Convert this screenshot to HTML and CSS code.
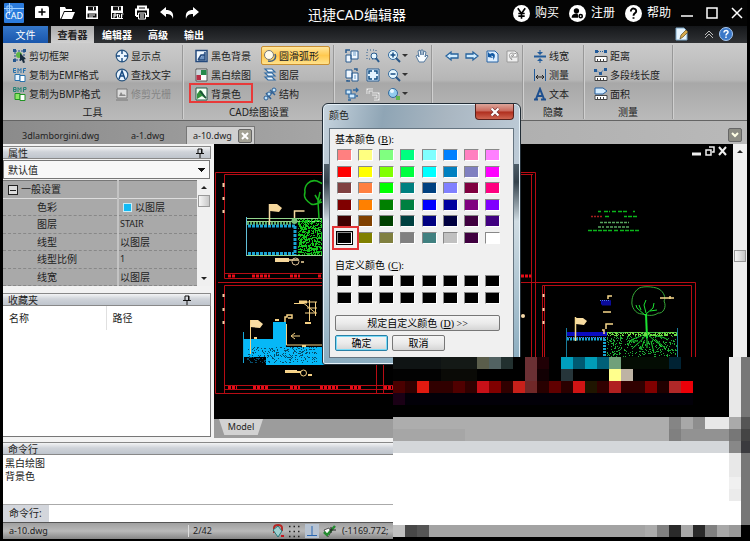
FILE: index.html
```html
<!DOCTYPE html>
<html lang="zh-CN">
<head>
<meta charset="utf-8">
<title>迅捷CAD编辑器</title>
<link rel="stylesheet" href="styles.css">
</head>
<body>
<div class="app">
  <header class="titlebar">
    <div class="quick">
      <svg class="logo" viewBox="0 0 20 20" role="img" aria-label="CAD"><rect width="20" height="20" rx="1" fill="#2b7bdc"/><path d="M0 5.500h20M5.500 0v12M3 3h5v5H3z" stroke="#9fd0ff" fill="none"/><text x="1" y="16" class="logo-text">CAD</text></svg>
      <button class="q" aria-label="新建"><svg viewBox="0 0 16 16"><path d="M3 1h10a2 2 0 0 1 2 2v10H1V3a2 2 0 0 1 2-2z" fill="#fff"/><path d="M8 3.500v7M4.500 7h7" stroke="#000" stroke-width="1.500"/></svg></button>
      <button class="q" aria-label="打开"><svg viewBox="0 0 16 16"><path d="M1 14V2h5l1 2h6v2H5L2 13z" fill="#fff"/><path d="M5.500 7H16l-3 7H2.500z" fill="#fff"/></svg></button>
      <button class="q" aria-label="保存"><svg viewBox="0 0 16 16"><path d="M2 1h12v13H2z" fill="#fff"/><path d="M4 1.500h8v4H4zM3.500 8.500h9v4h-9z" fill="#111"/><path d="M5 10h6M5 12h4M9.500 2v3" stroke="#fff"/></svg></button>
      <button class="q" aria-label="另存为PDF"><svg viewBox="0 0 16 16"><path d="M2 1h12v13H2z" fill="#fff"/><path d="M4 1.500h8v4H4zM3 8h11v5H3z" fill="#111"/><path d="M9.500 2v3M5 13V9h2v2H5M8.500 9v4h1l1-1v-2l-1-1M12.500 13V9h2M12.500 11h1" stroke="#fff" fill="none"/></svg></button>
      <button class="q" aria-label="打印"><svg viewBox="0 0 16 16"><path d="M4 4V1.500h8V4M2 11V4.500h12V11h-2M4 11H2" fill="none" stroke="#fff" stroke-width="2"/><path d="M4.500 8h7v6h-7z" fill="#111" stroke="#fff"/><path d="M6 10h4M6 12h4" stroke="#fff"/></svg></button>
      <button class="q" aria-label="撤销"><svg viewBox="0 0 16 16"><path d="M1 7l6-5v3c5 0 8 2 7 9-1-4-3-5-7-5v3z" fill="#fff"/></svg></button>
      <button class="q" aria-label="重做"><svg viewBox="0 0 16 16"><path d="M15 7L9 2v3c-5 0-8 2-7 9 1-4 3-5 7-5v3z" fill="#fff"/></svg></button>
    </div>
    <h1 class="title">迅捷CAD编辑器</h1>
    <div class="account">
      <button class="acc"><svg viewBox="0 0 16 16"><circle cx="8" cy="8" r="8" fill="#fff"/><path d="M4.500 3L8 8l3.500-5M8 8v5M5 8h6M5 10.500h6" stroke="#000" stroke-width="1.500" fill="none"/></svg>购买</button>
      <button class="acc"><svg viewBox="0 0 16 16"><circle cx="8" cy="8" r="8" fill="#fff"/><circle cx="7" cy="5.500" r="2.500" fill="#000"/><path d="M2.500 12c0-3 2-4 5-4 1 0 1 1 1 4z" fill="#000"/><circle cx="11" cy="10.500" r="1.500" fill="#fff" stroke="#000" stroke-width="1.500"/></svg>注册</button>
      <button class="acc"><svg viewBox="0 0 16 16"><circle cx="8" cy="8" r="8" fill="#fff"/><path d="M5.500 6c0-4 5.500-3 5 0 0 1.500-2.500 1.500-2.500 4M8 11.500V13" stroke="#000" stroke-width="1.800" fill="none"/></svg>帮助</button>
    </div>
    <div class="winctl">
      <button aria-label="最小化"><svg viewBox="0 0 14 14"><path d="M1 10h12" stroke="#fff" stroke-width="1.500"/></svg></button>
      <button aria-label="最大化"><svg viewBox="0 0 14 14"><path d="M2 2h10v10H2z" stroke="#fff" stroke-width="1.500" fill="none"/></svg></button>
      <button aria-label="关闭"><svg viewBox="0 0 14 14"><path d="M2 2l10 10M12 2L2 12" stroke="#fff" stroke-width="1.500"/></svg></button>
    </div>
  </header>

  <nav class="menubar">
    <button class="tab file">文件</button>
    <button class="tab current">查看器</button>
    <button class="tab">编辑器</button>
    <button class="tab">高级</button>
    <button class="tab">输出</button>
    <span class="menu-tools">
      <button aria-label="样式"><svg viewBox="0 0 14 14"><path d="M1 1h8l3 3v9H1z" fill="#e7f5ff" stroke="#7aa5c5"/><path d="M5 12l1-4 5-5 2 2-5 5z" fill="#d7a94b" stroke="#5d4a20" stroke-width=".7"/></svg></button>
      <button class="up" aria-label="折叠功能区"><svg viewBox="0 0 14 14"><path d="M3 8l4-4 4 4M3 11l4-4 4 4" stroke="#bbb" fill="none"/></svg></button>
      <button aria-label="帮助主题"><svg viewBox="0 0 14 14"><circle cx="7" cy="7" r="6.500" fill="#3b78c8" stroke="#a9caf2"/><path d="M5 5.500c0-3 4.500-2.500 4 0 0 1-2 1-2 3M7 9.500v1.500" stroke="#fff" stroke-width="1.500" fill="none"/></svg></button>
    </span>
  </nav>

  <section class="ribbon">
    <div class="group g-tools">
      <div class="cells">
        <button class="cmd"><svg viewBox="0 0 14 14"><path d="M2 2h9v9H2z" fill="none" stroke="#1d4d8c" stroke-dasharray="2 1"/><path d="M0 0h3v3H0zM10 0h3v3h-3zM0 10h3v3H0z" fill="#25578f"/><circle cx="6" cy="6" r="3" fill="#5db545"/><path d="M7 4l6 6-2 .5 1 3-2 .5-1-3-2 1z" fill="#182b3c"/></svg>剪切框架</button>
        <button class="cmd"><svg viewBox="0 0 14 14"><path d="M3 .5H.5v4H3M.5 2.500H3M5 5V.5l1.500 2 1.500-2V5M10.500 5V.5H13M10.500 2.500h2" stroke="#2872ac" fill="none"/><path d="M2 6.500h5v6H2z" fill="#e8f5ff" stroke="#2872ac"/><path d="M7 7.500h5v6H7z" fill="#fff" stroke="#2872ac"/></svg>复制为EMF格式</button>
        <button class="cmd"><svg viewBox="0 0 14 14"><path d="M.5.5H3v4H.5zM.5 2.500H3M5 5V.5l1.500 2 1.500-2V5M10.500 5V.5H13v2h-2" stroke="#258277" fill="none"/><path d="M2 6.500h5v6H2z" fill="#8be663" stroke="#229424"/><path d="M7 7.500h5v6H7z" fill="#fff" stroke="#229424"/></svg>复制为BMP格式</button>
        <button class="cmd"><svg viewBox="0 0 14 14"><circle cx="7" cy="7" r="5.800" fill="#eaf5ff" stroke="#29547e" stroke-width="1.200"/><path d="M7 1v4M7 9v4M1 7h4M9 7h4" stroke="#174a82" stroke-width="1.400"/></svg>显示点</button>
        <button class="cmd"><svg viewBox="0 0 14 14"><circle cx="7" cy="7" r="5.800" fill="#eaf5ff" stroke="#29547e" stroke-width="1.200"/><path d="M4 11l3-8 3 8M5 8h4" stroke="#174a82" stroke-width="1.500" fill="none"/></svg>查找文字</button>
        <button class="cmd" disabled><svg viewBox="0 0 14 14"><path d="M2 2h10v9H2zM1 13h12" fill="#ddd" stroke="#777"/><path d="M4 9l2-4 2 3 1-1 2 2z" fill="#888"/></svg>修剪光栅</button>
      </div>
      <h2>工具</h2>
    </div>
    <div class="group g-draw">
      <div class="cells">
        <button class="cmd"><svg viewBox="0 0 14 14"><path d="M1 1.500h11v11H1z" fill="#f1f8ff" stroke="#24497c" stroke-width="1.500"/><path d="M3 11l3-5h4V3M10 4v7H3" stroke="#24497c" stroke-width="1.500" fill="#6d91c0"/></svg>黑色背景</button>
        <button class="cmd"><svg viewBox="0 0 14 14"><path d="M1 1h11v12H1z" fill="#fff" stroke="#555"/><path d="M1.500 7H6v5H1.500z" fill="#b72f46"/><path d="M6 2h5.500v5H6z" fill="#268a4b"/><path d="M1.500 2H6v5H1.500z" fill="#cad7dc"/></svg>黑白绘图</button>
        <button class="cmd"><svg viewBox="0 0 14 14"><path d="M1 1h11v12H1z" fill="#f5fff5" stroke="#265c4b"/><path d="M2 12V7l3-4 2 1 4 8-4-3z" fill="#34923e"/><path d="M5 4l6 7" stroke="#174c37" stroke-width="1.500"/></svg>背景色</button>
        <button class="cmd active"><svg viewBox="0 0 14 14"><circle cx="6" cy="6" r="4.500" fill="#fffbe9" stroke="#777"/><path d="M12 5c2 5-2 8-7 7" stroke="#466180" stroke-width="1.500" fill="none"/></svg>圆滑弧形</button>
        <button class="cmd"><svg viewBox="0 0 14 14"><path d="M2 1h7l3 3H5zM2 5h7l3 3H5zM2 9h7l3 3H5z" fill="#f3faff" stroke="#356da4" stroke-width="1.200"/></svg>图层</button>
        <button class="cmd"><svg viewBox="0 0 14 14"><path d="M2 12l10-9M3 6l5 6M7 3l5 5" stroke="#2e6095" stroke-width="1.500"/><g fill="#bee4ff" stroke="#2e6095"><circle cx="3" cy="11" r="2"/><circle cx="6" cy="7" r="2"/><circle cx="11" cy="3" r="2"/></g></svg>结构</button>
      </div>
      <h2>CAD绘图设置</h2>
    </div>
    <div class="group g-view">
      <div class="cells">
        <button class="cmd" aria-label="旋转视图"><svg viewBox="0 0 14 14"><path d="M1 6h5v7H1zM6 2h7v8H6z" fill="#f1f8ff" stroke="#285b8e"/><path d="M1 4V1h4" stroke="#285b8e" stroke-width="1.500" fill="none"/><path d="M8 4h3M8 6h3" stroke="#6b9cc8"/></svg></button>
        <button class="cmd" aria-label="复制视图"><svg viewBox="0 0 14 14"><path d="M1 2h6v8H1zM7 5h6v8H7z" fill="#f1f8ff" stroke="#285b8e"/><path d="M9 1h3v2M2 12v1h3" stroke="#285b8e" stroke-width="1.500" fill="none"/><path d="M9 8h2M9 10h2" stroke="#6b9cc8"/></svg></button>
        <button class="cmd" aria-label="三维轨道"><svg viewBox="0 0 14 14"><path d="M1 3h5v4H1zM4 7h6v4H4z" fill="#d3edff" stroke="#2c67a0" stroke-width="1.200"/><path d="M8 3h5M11 1l2 2-2 2M3 13h3M11 9h2" stroke="#2c67a0" stroke-width="1.300" fill="none"/></svg></button>
        <button class="cmd" aria-label="窗口缩放"><svg viewBox="0 0 14 14"><path d="M1 1h9v9H1z" fill="none" stroke="#285b8e" stroke-dasharray="1 2"/><circle cx="8" cy="7" r="3" fill="#e6f6ff" stroke="#285b8e"/><path d="M10 9l3 4" stroke="#285b8e" stroke-width="2"/></svg></button>
        <button class="cmd" aria-label="适合窗口"><svg viewBox="0 0 14 14"><path d="M1 1h12v12H1z" fill="#e3f3ff" stroke="#285b8e"/><path d="M3 6V3h3M8 3h3v3M11 8v3H8M6 11H3V8" stroke="#124e82" stroke-width="1.500" fill="none"/></svg></button>
        <button class="cmd" disabled aria-label="刷新"><svg viewBox="0 0 14 14"><path d="M2 7V3h5M6 7h6v5H8" stroke="#eee" stroke-width="3" fill="none"/><path d="M2 7V3h5M6 7h6v5H8" stroke="#999" fill="none"/></svg></button>
        <button class="cmd drop" aria-label="放大"><svg viewBox="0 0 14 14"><circle cx="6" cy="6" r="4.500" fill="#e5f7ff" stroke="#356b9e"/><path d="M6 3.500v5M3.500 6h5" stroke="#174c83" stroke-width="1.500"/><path d="M9 9l4 4" stroke="#285687" stroke-width="2"/></svg></button>
        <button class="cmd drop" aria-label="缩小"><svg viewBox="0 0 14 14"><circle cx="6" cy="6" r="4.500" fill="#e5f7ff" stroke="#356b9e"/><path d="M3.500 6h5" stroke="#174c83" stroke-width="1.500"/><path d="M9 9l4 4" stroke="#285687" stroke-width="2"/></svg></button>
        <button class="cmd drop" aria-label="缩放比例"><svg viewBox="0 0 14 14"><circle cx="6" cy="6" r="4.500" fill="#92cbed" stroke="#356b9e"/><circle cx="5" cy="4" r="2" fill="#eaf8ff"/><path d="M9 9l2 2" stroke="#285687" stroke-width="2"/><path d="M9 9h4v4H9z" fill="#62b54d"/></svg></button>
        <button class="cmd" aria-label="平移"><svg viewBox="0 0 14 14"><path d="M4 13L1 7l2-1 1 2-1-6 2-1 1 5V1h2v5l1-4 2 1-1 5 2-2 1 1-4 6z" fill="#f8fcff" stroke="#55799d"/></svg></button>
      </div>
    </div>
    <div class="group g-history">
      <div class="cells">
        <button class="cmd" aria-label="上一视图"><svg viewBox="0 0 14 14"><path d="M1 7l5-4v2h7v4H6v2z" fill="#d2edff" stroke="#27639d" stroke-width="1.300"/></svg></button>
        <button class="cmd" aria-label="下一视图"><svg viewBox="0 0 14 14"><path d="M13 7L8 3v2H1v4h7v2z" fill="#d2edff" stroke="#27639d" stroke-width="1.300"/></svg></button>
        <button class="cmd" aria-label="初始视图"><svg viewBox="0 0 14 14"><path d="M2 2h8l3 3v8H2z" fill="#deefff" stroke="#2762a4"/><path d="M3 8V3l2 2c4-3 7 2 3 6 1-4-1-5-2-4l2 2z" fill="#135aa4"/></svg></button>
        <button class="cmd" disabled aria-label="重做视图"><svg viewBox="0 0 14 14"><path d="M2 2h8l3 3v8H2z" fill="#eee" stroke="#999"/><path d="M12 3v5H7l2-2c-3-1-4 2-2 5-5-4-2-9 3-6z" fill="#fff" stroke="#999"/></svg></button>
      </div>
    </div>
    <div class="group g-hide">
      <div class="cells">
        <button class="cmd"><svg viewBox="0 0 14 14"><path d="M1 7.500h12" stroke="#235c9b" stroke-width="2"/><path d="M7 1v4M7 10v4" stroke="#235c9b"/><path d="M4 3l3 3 3-3zM4 12l3-3 3 3z" fill="#235c9b"/></svg>线宽</button>
        <button class="cmd"><svg viewBox="0 0 14 14"><path d="M1.500 1v12M12.500 1v12" stroke="#235c9b"/><path d="M3 9h8M5 7L3 9l2 2M9 7l2 2-2 2" stroke="#222" fill="none"/></svg>测量</button>
        <button class="cmd"><svg viewBox="0 0 14 14"><path d="M3 12L7 2l4 10M4 9h5M1 12.500h4M8 12.500h5" stroke="#1d4f8f" stroke-width="2" fill="none"/></svg>文本</button>
      </div>
      <h2>隐藏</h2>
    </div>
    <div class="group g-measure">
      <div class="cells">
        <button class="cmd"><svg viewBox="0 0 14 14"><path d="M1 1h3v3H1zM10 1h3v3h-3z" fill="#235c9b"/><path d="M4 2.500h6" stroke="#235c9b" stroke-dasharray="1 1"/><path d="M1 7.500h12v5H1z" fill="#fff" stroke="#444"/><path d="M3.500 10v2M6.500 10v2M9.500 10v2" stroke="#444"/></svg>距离</button>
        <button class="cmd"><svg viewBox="0 0 14 14"><path d="M0 1h3v3H0zM5 4h3v3H5zM10 0h3v3h-3z" fill="#235c9b"/><path d="M2 2l4 3 5-4" stroke="#235c9b" fill="none" stroke-dasharray="1 1"/><path d="M1 8.500h12v4H1z" fill="#fff" stroke="#444"/><path d="M3.500 10v2M6.500 10v2M9.500 10v2" stroke="#444"/></svg>多段线长度</button>
        <button class="cmd"><svg viewBox="0 0 14 14"><path d="M1 1h8l4 3-4 3H1z" fill="#d5ecff" stroke="#235c9b"/><path d="M1 8.500h12v4H1z" fill="#fff" stroke="#444"/><path d="M3.500 10v2M6.500 10v2M9.500 10v2" stroke="#444"/></svg>面积</button>
      </div>
      <h2>测量</h2>
    </div>
  </section>

  <nav class="doctabs">
    <button class="doc first">3dlamborgini.dwg</button>
    <button class="doc second">a-1.dwg</button>
    <span class="doc open">a-10.dwg<button class="doc-close" aria-label="关闭文档"><svg viewBox="0 0 12 12"><path d="M3 3l6 6M9 3L3 9" stroke="#fff" stroke-width="2"/></svg></button></span>
    <button class="doc-list" aria-label="文档列表"><svg viewBox="0 0 12 12"><path d="M3 4l3 3 3-3" stroke="#ffffe6" stroke-width="2" fill="none"/></svg></button>
  </nav>

  <main class="work">
    <aside class="side">
      <h3 class="pane-title">属性<svg viewBox="0 0 10 10"><path d="M3 5V1h4v4M1 5.500h8M5 6v4M6.500 1v4" stroke="#111" fill="none"/></svg></h3>
      <select class="preset" aria-label="属性预设"><option>默认值</option></select>
      <div class="props-wrap">
        <table class="props">
          <tr class="cat"><th><span class="minus"></span>一般设置</th><td></td></tr>
          <tr><th>色彩</th><td><span class="chip"></span>以图层</td></tr>
          <tr><th>图层</th><td class="latin">STAIR</td></tr>
          <tr><th>线型</th><td>以图层</td></tr>
          <tr><th>线型比例</th><td class="latin">1</td></tr>
          <tr><th>线宽</th><td>以图层</td></tr>
        </table>
        <div class="scroll"><i class="arr-up"></i><i class="thumb"></i><i class="arr-down"></i></div>
      </div>
      <h3 class="pane-title fav-title">收藏夹<svg viewBox="0 0 10 10"><path d="M3 5V1h4v4M1 5.500h8M5 6v4M6.500 1v4" stroke="#111" fill="none"/></svg></h3>
      <div class="fav"><table><tr><th>名称</th><th>路径</th></tr></table></div>
    </aside>

    <section class="view">
      <div class="stage">
        <svg class="drawing" viewBox="214 143 519 275" preserveAspectRatio="xMinYMin meet">
          <g fill="none" stroke="#b80c14">
            <path d="M215.500 171.500H535.500V392.500H215.500zM224.500 393V284.500H340M218 281.500H695.500V393M224.500 277.500V173.500H533M224.500 277.500H340M224.500 272.500H340M224.500 388.500H395M224.500 384.500H395M531.500 173V393M542.500 393V284.500H691.500V393M544.500 393V284M376.500 350V393M383.500 350V393"/>
          </g>
          <path stroke="#e80d18" stroke-width="3" stroke-dasharray="3 1" d="M228 275h8M252 275h18M290 275h10M318 275h22M228 386.500h9M253 386.500h16M290 386.500h10M320 386.500h18M350 386.500h12M384 386.500h9M521 275h10"/>
          <path stroke="#f0cfa8" stroke-width="2" d="M223.500 182v4M223.500 196v3M223.500 209v3M223.500 293v3M223.500 307v3M223.500 320v3M543.500 293v3M543.500 307v3M543.500 320v3"/>
          <g fill="none">
            <path stroke="#93d58d" d="M246 217.500h76M246 220.500h76M247 254.500h76"/>
            <path stroke="#5fab65" stroke-width="3" stroke-dasharray="2 1" d="M247 222.500h45"/>
            <path stroke="#1aa4d4" stroke-width="3" stroke-dasharray="3 1" d="M248 225h48M295 225v29M248 252.500h46"/>
            <path stroke="#62bfd8" d="M246.500 216v39"/>
            <path stroke="#f5d9a0" stroke-width="1.500" d="M269.500 203v21M294.500 218v-8h10M281 259h17M301 261h3M275 259.500h12"/>
            <circle cx="295.500" cy="260.500" r="3.500" stroke="#dec298"/>
            <path stroke="#18b41c" d="M325 184l-8-4c-8-2-13 5-12 11-2 6 2 9 6 12 4 2 8-2 12-2M319 218l-1-18 2-9M318 199l-3-5M318 203l3-5" stroke-width="1.500"/>
          </g>
          <path fill="#f6d79b" d="M270 203h7l5 4-3 4-9-1zM275 257h14v4h-14zM285 369h12v3h-12z"/>
          <circle cx="294.500" cy="220" r="3" fill="#79c37b"/>
          <path fill="#06b8f7" d="M244 338h29v-17h13v25h50v18h-70v-8h-22z"/>
          <g fill="none" stroke="#f6d184">
            <path d="M250.500 319v34M286.500 323v21h44M292 335h8M295 332l-4 3 4 3M294 302.500h10l11 9M309.500 299v21M315.500 301v14M303 301l14 0M307 307h10M305 312h12" />
            <path d="M285 321v-5h2v-2h5v3h-4" stroke-width="1.500"/>
            <path d="M299 301h8" stroke-width="3"/>
            <path d="M275 319h4M254 337h3M302 345h4M305 322h6M285 371h16M308 374h4" stroke-width="2"/>
            <circle cx="303.500" cy="372" r="3"/>
          </g>
          <path fill="#f9dda3" d="M251 319h7l5 4-3 4-10-1z"/><path stroke="#15a7d8" d="M243.500 331v31"/>
          <g fill="none">
            <path stroke="#197b9a" d="M566.500 327v30M677.500 327v30"/>
            <path stroke="#0b0bc0" stroke-width="4" d="M567 333h40M601 301.500h10"/>
            <path stroke="#0b0b9a" stroke-width="5" d="M602 302h9"/>
            <path stroke="#18a6d1" stroke-width="3" stroke-dasharray="2 1" d="M567 338h39M604.500 338v20"/>
            <path stroke="#4b75f0" stroke-dasharray="1 1" d="M567 336.500h39M600 299.500h9"/>
            <path stroke="#43b949" stroke-width="1" d="M607 331.500h70"/>
            <path stroke="#37a939" d="M638 288c2-3 15-3 21 0 5 3 7 9 5 12 3 6-1 13-6 12-5 4-12 2-16 1-7 0-11-8-10-13 0-5 3-10 6-12z"/>
            <path stroke="#1ce332" stroke-width="2" d="M647 337l-1-24"/>
            <path stroke="#1ce332" d="M646 315l-9-8-1-3M646 312l-2-8 2-5M646 313l7-6 1-5M641 309l-2-5M650 310l7-1M646 331c-4 5-9 5-15 8l-3 5M646 333c-3 6-8 9-13 14M647 331c4 5 15 3 21 8M648 333c4 6 10 8 14 13M647 333v14M644 340l-3 9M651 340l3 12M655 338l11 10M638 340l-9 0"/>
            <path stroke="#f7d88b" stroke-width="1.500" d="M575.500 316v24M660 297h14M670 295v3M608 298v-3h4M603 311h8M604 333v-4h-2M606 328v-5h7"/>
          </g>
          <path fill="#f8dda2" d="M576 317h7l4 3-3 4-8-1z"/><circle cx="523" cy="315" r="2" fill="#f6d9a8"/>
          <path id="grass-left" stroke="#14c51c"/><path id="grass-right" stroke="#1dab35"/><path id="soil" stroke="#064b69"/><path id="turf" stroke="#6fdb45"/>
          <g stroke="#0bb51b" stroke-width="1.500" fill="none">
            <path d="M598 210.500h3M604 210.500h6M612 210.500h4M618 210.500h9M633 210.500h2M605 215.500h5M624 215.500h3M628 215.500h9M588 229.500h24M614 229.500h4M620 229.500h20" stroke-dasharray="4 1"/>
            <path d="M600 221.500h29M598 226h6M606 226h24" stroke-dasharray="3 1" stroke="#58a55f"/>
            <path d="M591 215.500h11" stroke="#a22020" stroke-dasharray="2 1"/>
          </g>
        </svg>
        <div class="mdi"><svg viewBox="0 0 38 10"><path d="M1 8h9" stroke="#eee" stroke-width="3"/><path d="M18 1h5v5h-2M15 4h5v5h-5z" stroke="#eee" stroke-width="1.500" fill="none"/><path d="M28 1l7 8M35 1l-7 8" stroke="#eee" stroke-width="2"/></svg></div>
      </div>
      <div class="model-bar"><button class="model">Model</button></div>
    </section>
    <div class="scroll vscroll"><i class="arr-up"></i><i class="thumb"></i></div>
  </main>

  <section class="command">
    <h3 class="pane-title">命令行</h3>
    <div class="log"><p>黑白绘图</p><p>背景色</p></div>
    <div class="prompt"><label for="cmd">命令行:</label><input id="cmd" type="text"></div>
  </section>

  <footer class="status">
    <span class="s-file">a-10.dwg</span>
    <span class="s-page">2/42</span>
    <button aria-label="对象捕捉"><svg viewBox="0 0 14 14"><path d="M3 9V4c0-4 8-4 8 0v3" stroke="#b52825" stroke-width="2" fill="none"/><path d="M2 6l5-4 4 5-4 6z" fill="#9ed0d0" stroke="#287779"/><path d="M10 11h3v2h-3z" fill="#c5161f"/></svg></button>
    <button aria-label="栅格"><svg viewBox="0 0 14 14"><path d="M1 2.500h13M1 7.500h13M1 12.500h13" stroke="#222" stroke-width="1.500" stroke-dasharray="1.500 3"/></svg></button>
    <button class="pressed" aria-label="正交"><svg viewBox="0 0 14 14"><path d="M7 2v9M2 11.500h10" stroke="#2866b2" fill="none"/></svg></button>
    <button aria-label="线宽显示"><svg viewBox="0 0 14 14"><path d="M2 6l5-2 2 4-3 5z" fill="#fff" stroke="#555"/><path d="M2 8l3 3 8-9" stroke="#238b2f" stroke-width="2.500" fill="none"/><path d="M8 6h6M9 3v6" stroke="#222"/></svg></button>
    <span class="coords">(-1169.772;</span>
  </footer>

  <section class="dialog" role="dialog" aria-label="颜色">
    <div class="dlg-head"><span>颜色</span><button class="dlg-close" aria-label="关闭"><svg viewBox="0 0 12 10"><path d="M2.500 1.500l7 7M9.500 1.500l-7 7" stroke="#733" stroke-width="3.500"/><path d="M2.500 1.500l7 7M9.500 1.500l-7 7" stroke="#fff" stroke-width="2.200"/></svg></button></div>
    <div class="dlg-body">
      <p class="lbl">基本颜色<span>(<u>B</u>):</span></p>
      <div class="swatches basic" id="basic"></div>
      <p class="lbl custom-lbl">自定义颜色<span>(<u>C</u>):</span></p>
      <div class="swatches custom" id="custom"></div>
      <button class="btn wide">规定自定义颜色<span>(<u>D</u>) &gt;&gt;</span></button>
      <div class="btns"><button class="btn ok">确定</button><button class="btn">取消</button></div>
    </div>
  </section>
  <div class="mark mark-ribbon"></div>
  <svg class="mosaic" id="mosaic" viewBox="0 0 360 192" shape-rendering="crispEdges"></svg>
</div>
<script src="script.js"></script>
</body>
</html>
```
FILE: styles.css
```css
* { box-sizing: border-box; }
body {
  margin: 0;
  background: #000;
  color: #222;
  font: 10px/12px "Noto Sans", "Noto Sans CJK SC", sans-serif;
}
button, input, select { font: inherit; color: inherit; border: 0; padding: 0; margin: 0; background: none; border-radius: 0; }
h1, h2, h3, p { margin: 0; font-weight: normal; font-size: inherit; }
svg { display: block; flex: none; }
table { border-collapse: collapse; }
th { font-weight: normal; text-align: left; }

.app { position: relative; display: flex; flex-direction: column; min-height: 100vh; padding: 0 3px 2px; overflow: hidden; }

.titlebar { display: flex; align-items: center; height: 26px; color: #fff; background: #040404; }
.quick { display: flex; align-items: center; gap: 9px; flex: 1; }
.logo { width: 20px; height: 20px; margin: 0 1px; }
.logo-text { font: 9px/9px "Noto Sans", sans-serif; fill: #fff; }
.q svg { width: 16px; height: 16px; }
.title { font-size: 14px; line-height: 20px; padding: 3px 0 0 40px; }
.account { display: flex; flex: 1; justify-content: flex-end; gap: 10px; margin-right: 9px; }
.acc { display: flex; align-items: center; gap: 5px; font-size: 12px; line-height: 16px; }
.acc svg { width: 17px; height: 17px; }
.winctl { display: flex; gap: 11px; margin-right: 3px; }
.winctl svg { width: 14px; height: 14px; }

.menubar { display: flex; height: 17px; color: #fff; background: linear-gradient(#15171a, #303235); }
.tab { font-weight: bold; padding: 0 8px; line-height: 16px; }
.tab.file { width: 45px; margin-right: 3px; font-weight: normal; background: linear-gradient(#3577c9, #1956ac); }
.tab.current { width: 43px; color: #222; background: linear-gradient(#aaa, #d1d1d1); padding: 0 5px; }
.menu-tools { display: flex; align-items: center; gap: 6px; margin: 0 14px 2px auto; }
.menu-tools svg { width: 14px; height: 14px; }
.menu-tools .up { margin-left: 7px; margin-right: -3px; }

.ribbon { display: flex; height: 78px; background: linear-gradient(#cbcbcb, #b6b6b6 48%, #a8a8a8 52%, #bababa); border-bottom: 1px solid #646464; }
.group { display: flex; flex-direction: column; border-right: 1px solid #989898; box-shadow: 1px 0 #d0d0d0; margin: 2px 0 1px; padding: 1px 0 0 8px; }
.cells { display: grid; grid-template-rows: repeat(3, 19px); grid-auto-flow: column; justify-content: start; }
.cmd { display: flex; align-items: center; gap: 2px; padding: 0 2px; height: 19px; white-space: nowrap; }
.cmd svg { width: 14px; height: 14px; }
.cmd:disabled { color: #858585; }
.group h2 { text-align: center; line-height: 18px; margin-left: -8px; }
.g-tools { width: 180px; }
.g-tools .cells { grid-template-columns: 102px auto; }
.g-draw { width: 151px; padding-left: 10px; }
.g-draw .cells { grid-template-columns: 68px 69px; }
.cmd.active { border: 1px solid #c98f31; border-radius: 2px; padding: 0 1px; background: linear-gradient(#ffe59b, #ffc94f 50%, #ffe28b); }
.g-view { width: 98px; padding-left: 9px; }
.g-view .cells { grid-template-columns: 21px 21px 28px 20px; }
.drop::after { content: ""; border: 3px solid transparent; border-top-color: #333; border-bottom: 0; margin-left: -1px; }
.g-history { width: 91px; padding-left: 11px; }
.g-history .cells { grid-template-rows: 19px; grid-auto-columns: 20px; }
.g-hide { width: 61px; }
.g-measure { width: 89px; }

.doctabs { display: flex; align-items: flex-end; height: 23px; background: linear-gradient(90deg, #8b8b8b, #aaa 50%, #b9b9b9); font-size: 9px; }
.doc { height: 18px; line-height: 17px; text-align: left; }
.first { padding-left: 19px; width: 128px; }
.second { width: 55px; }
.doc.open { display: flex; align-items: center; justify-content: space-between; width: 69px; padding: 0 2px 0 6px; background: #d0d0d0; border: 1px solid #777; border-bottom: 0; }
.doc-close, .doc-list { width: 14px; height: 14px; border: 1px solid #666; border-radius: 2px; background: #a3a194; }
.doc-close svg, .doc-list svg { width: 12px; height: 12px; }
.doc-list { margin: 0 5px 2px auto; background: #8c8c84; }

.work { display: flex; height: 294px; background: #f2f2f2; }
.side { display: flex; flex-direction: column; width: 208px; padding-top: 2px; margin-right: 3px; }
.pane-title { display: flex; align-items: center; justify-content: space-between; height: 13px; padding: 0 5px; border: 1px solid #888; border-left: 0; background: linear-gradient(#f3f4f5, #cfd3d9 45%, #bfc5cd); }
.pane-title svg { width: 10px; height: 10px; }
.fav-title { margin-top: 7px; padding-right: 18px; }
.preset {
  appearance: none;
  height: 19px;
  margin: 1px 1px 1px 0;
  padding: 0 4px;
  border: 1px solid #777;
  background: conic-gradient(from 315deg at 50% 4px, #111 90deg, #f8f8f8 0) no-repeat right 4px center / 7px 4px #f8f8f8;
}
.props-wrap { display: flex; height: 106px; }
.props { flex: 1; height: 106px; background: #a9a9a9; border-top: 1px solid #777; table-layout: fixed; }
.props tr { height: 17px; border-bottom: 1px dashed #888; }
.props .cat { border-bottom: 1px solid #ddd; }
.props th { width: 115px; padding: 0 0 0 34px; border-right: 2px solid #c3c3c3; }
.props td { padding: 0 1px; }
.props .cat th { padding-left: 5px; }
.props .latin { font-size: 9px; }
.minus { display: inline-block; width: 10px; height: 10px; margin-right: 3px; vertical-align: -2px; border: 1px solid #222; background: linear-gradient(#222, #222) center / 6px 1px no-repeat #ddd; }
.chip { display: inline-block; width: 9px; height: 9px; margin: 0 3px; vertical-align: -1px; background: #11baf5; border: 1px solid #c8edf7; }
.scroll { display: flex; flex-direction: column; align-items: center; width: 14px; padding: 6px 0; background: #f0f0f0; }
.arr-up { border: 3px solid transparent; border-top: 0; border-bottom-color: #222; }
.arr-down { border: 3px solid transparent; border-bottom: 0; border-top-color: #222; margin-top: auto; }
.thumb { width: 12px; height: 12px; margin-top: 6px; border: 1px solid #999; background: linear-gradient(90deg, #f6f6f6, #c8c8c8); }
.fav { flex: 1; background: #fff; border-right: 1px solid #777; border-bottom: 1px solid #777; margin-bottom: 1px; }
.fav th { height: 24px; padding: 0 6px; border-left: 1px solid #e0e0e0; }
.fav th:first-child { width: 103px; border-left: 0; }

.view { flex: 1; display: flex; flex-direction: column; min-width: 0; background: #000; }
.stage { flex: 1; position: relative; overflow: hidden; }
.drawing { width: 519px; height: 275px; }
.mdi { position: absolute; top: 2px; right: 4px; }
.mdi svg { width: 38px; height: 10px; }
.model-bar { height: 19px; background: #9c9c9c; padding-left: 5px; }
.model { width: 44px; height: 16px; font-size: 9px; background: #d2d2d2; clip-path: polygon(0 0, 100% 0, 88% 100%, 12% 100%); }
.vscroll .thumb { margin-top: 97px; }

.command { flex: 1; display: flex; flex-direction: column; padding-top: 4px; background: #f3f3f3; }
.log { flex: 1; padding: 2px; background: #fff; line-height: 13px; }
.prompt { display: flex; height: 18px; border-top: 1px solid #aaa; background: #fff; }
.prompt label { width: 46px; padding-left: 6px; line-height: 17px; background: #d3d6dc; }
.prompt input { flex: 1; min-width: 0; }

.status { display: flex; align-items: center; height: 17px; font-size: 9px; background: linear-gradient(#a0a0a0, #b9b9b9 50%, #858585); border-top: 1px solid #555; }
.s-file { width: 185px; padding-left: 6px; }
.s-page { width: 83px; padding-left: 4px; border-left: 1px solid #ddd; }
.status button { width: 14px; margin-right: 3px; }
.status svg { width: 14px; height: 14px; }
.status .pressed { background: #b7c3d2; }
.coords { margin-left: 3px; }

.dialog { position: absolute; left: 322px; top: 103px; width: 199px; padding: 0 6px 6px; border: 1px solid #222d36; border-radius: 6px 6px 3px 3px; box-shadow: inset 0 0 0 1px #e6f1f8; background: linear-gradient(100deg, #c7d4de, #8fa5b5 30%, #a9b6c1 60%, #bdcbd7) top / 100% 60px no-repeat, linear-gradient(#a9bccb, #35424c 30%, #d0dce3 45%, #8aacbf); }
.dlg-head { display: flex; justify-content: space-between; height: 24px; line-height: 22px; }
.dlg-close { display: flex; align-items: center; justify-content: center; width: 39px; height: 16px; border: 1px solid #59201b; border-top: 0; border-radius: 0 0 4px 4px; background: linear-gradient(#dca59a, #c9675a 48%, #ae2d1d 52%, #ce6450); }
.dlg-close svg { width: 12px; height: 10px; }
.dlg-body { padding: 4px 13px 6px 5px; border: 1px solid #657480; background: #f0f0f0; color: #000; }
.lbl { line-height: 12px; }
.lbl span, .btn span { font-family: "Liberation Serif", serif; padding-left: 3px; }
.swatches { display: grid; grid-template-columns: repeat(8, 15px); justify-content: space-between; align-content: space-between; margin: 3px 0 0 2px; }
.basic { height: 95px; }
.custom { height: 29px; }
.custom-lbl { margin-top: 15px; }
.swatch { height: 12px; border: 1px solid #fff; border-top-color: #888; border-left-color: #888; }
.swatch.selected { outline: 1px solid #000; position: relative; }
.swatch.selected::after { content: ""; position: absolute; inset: -7px -8px -7px -6px; border: 2px solid #e33336; }
.btn { height: 16px; border: 1px solid #777; border-radius: 2px; background: linear-gradient(#f5f5f5, #ebebeb 50%, #d5d5d5); line-height: 14px; }
.wide { width: 100%; margin-top: 11px; }
.btns { display: flex; gap: 4px; margin-top: 4px; }
.btns .btn { width: 53px; }
.ok { border-color: #297fa5; box-shadow: inset 0 0 0 1px #7bdcf8; }
.mark { position: absolute; border: 2px solid #e83a3a; pointer-events: none; }
.mark-ribbon { left: 189px; top: 83px; width: 64px; height: 20px; }
.mosaic { position: absolute; left: 393px; top: 357px; width: 360px; height: 192px; }
```
FILE: script.js
```js
const basicColors = [
  '#ff8080', '#ffff80', '#80ff80', '#00ff80', '#80ffff', '#0080ff', '#ff80c0', '#ff80ff',
  '#ff0000', '#ffff00', '#80ff00', '#00ff40', '#00ffff', '#0080c0', '#8080c0', '#ff00ff',
  '#804040', '#ff8040', '#00ff00', '#008080', '#004080', '#8080ff', '#800040', '#ff0080',
  '#800000', '#ff8000', '#008000', '#008040', '#0000ff', '#0000a0', '#800080', '#8000ff',
  '#400000', '#804000', '#004000', '#004040', '#000080', '#000040', '#400040', '#400080',
  '#000000', '#808000', '#808040', '#808080', '#408080', '#c0c0c0', '#400040', '#ffffff'
];

function fillSwatches(id, colors, selected) {
  const host = document.getElementById(id);
  colors.forEach((color, i) => {
    const b = document.createElement('button');
    b.className = i === selected ? 'swatch selected' : 'swatch';
    b.style.background = color;
    b.setAttribute('aria-label', color);
    host.append(b);
  });
}
fillSwatches('basic', basicColors, 40);
fillSwatches('custom', Array(16).fill('#000'), -1);

// Hatch fills: scattered dots inside a rectangle.
let seed = 7;
const rand = () => (seed = (seed * 16807) % 2147483647) / 2147483647;
function hatch(id, x, y, w, h, density) {
  let d = '';
  for (let j = 0; j < h; j++)
    for (let i = 0; i < w; i++)
      if (rand() < density) d += `M${x + i} ${y + j + 0.5}h1`;
  document.getElementById(id).setAttribute('d', d);
}
hatch('grass-left', 298, 218, 26, 36, 0.6);
hatch('grass-right', 607, 335, 70, 22, 0.2);
hatch('soil', 247, 346, 70, 16, 0.2);
hatch('turf', 607, 331, 70, 4, 0.5);

// Mosaic rows: each entry is [colour, number of 12px cells].
const K = '#000', R = '#300000';
const edge = [['#e8e8e8', 1], ['#777', 1]];
const rows = [
  [['#0f1414', 4], ['#141916', 3], ['#5a5d4b', 1], ['#526262', 1], ['#22302f', 1], [K, 1], ['#6b3034', 1], ['#200005', 1], [K, 1], ['#009fbe', 1], ['#005a72', 1], ['#009db8', 1], ['#006078', 1], ['#70a07a', 1], ['#030c03', 4], ['#002233', 1], [K, 4], ...edge],
  [['#020202', 4], ['#0a0a06', 3], [K, 4], ['#6b3034', 1], ['#120003', 1], [K, 1], ['#26353a', 1], [K, 3], ['#ffff8c', 1], ['#beb3a4', 1], [K, 8], ...edge],
  [['#4a0000', 1], [R, 1], ['#e01a10', 1], [R, 2], ['#500000', 1], [R, 1], ['#c81018', 1], ['#800000', 1], [R, 1], ['#c8201a', 1], ['#702828', 1], ['#280000', 1], ['#600000', 1], ['#2a0000', 1], ['#d01414', 1], ['#1f1500', 1], [R, 1], ['#b02020', 1], [R, 2], ['#800000', 1], ['#200000', 1], ['#b02828', 1], ['#ec0008', 1], [K, 3], ...edge],
  [['#1a0015', 1], ['#020008', 24], [K, 3], ...edge],
  [[K, 28], ...edge],
  [['#adadad', 23], ['#858585', 1], ['#a8a8a8', 1], ['#8e8e8e', 1], ['#e8e8e8', 2], ['#aaa', 1], ['#555', 1]],
  [['#a6a6a6', 6], ['#adadad', 17], ['#808080', 1], ['#929292', 4], ['#777', 1], ['#444', 1]],
  [['#d4d7da', 28], ['#888', 1], ['#3a3a3e', 1]],
  [['#fff', 28], ...edge],
  [['#fff', 28], ...edge],
  [['#fff', 28], ['#f0f0f0', 1], ['#777', 1]],
  [['#fff', 28], ['#ebebeb', 1], ['#777', 1]],
  [['#fff', 29], ['#777', 1]],
  [['#fff', 29], ['#777', 1]],
  [['#c0c0c0', 1], ['#484848', 1], ['#555', 1], ['#a3a3a3', 18], ['#ababab', 1], ['#808080', 1], ['#2a2a2a', 1], ['#a8a8a8', 1], ['#2a2a2a', 1], ['#808080', 1], ['#a8a8a8', 1], ['#999', 1], [K, 1]],
  [[K, 30]]
];
document.getElementById('mosaic').innerHTML = rows.map((row, r) => {
  let col = 0;
  return row.map(([color, n]) => {
    const cell = `<rect x="${col * 12}" y="${r * 12}" width="${n * 12}" height="12" fill="${color}"/>`;
    col += n;
    return cell;
  }).join('');
}).join('');
```
